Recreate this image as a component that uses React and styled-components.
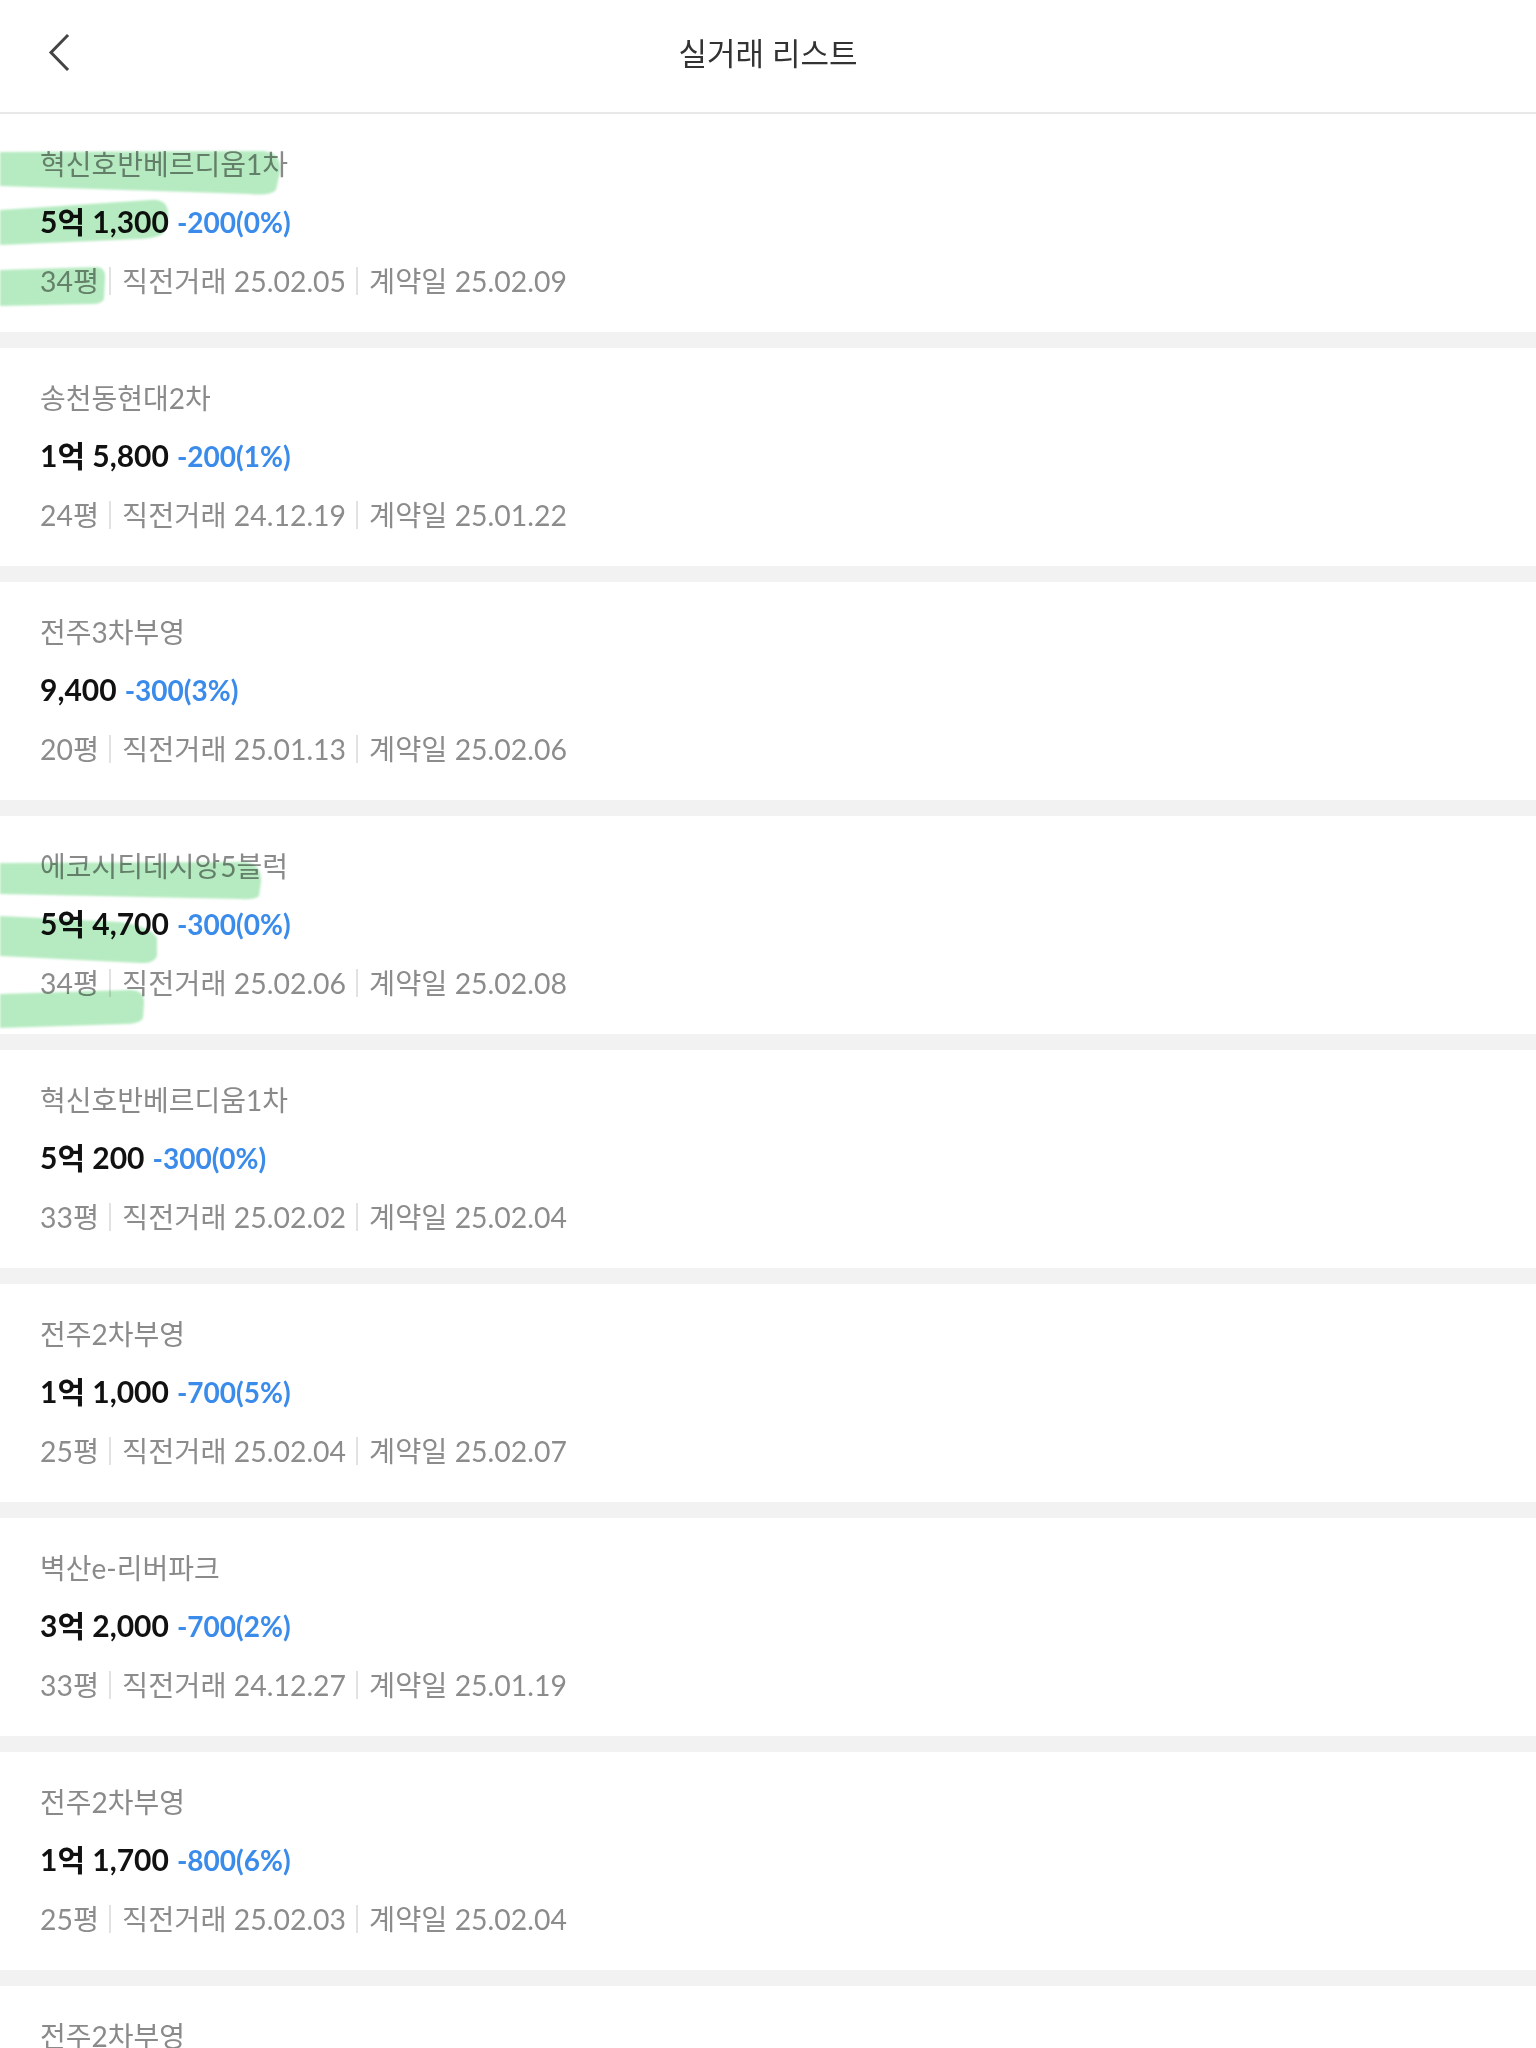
import React from "react";
import styled, { createGlobalStyle } from "styled-components";

const GlobalStyle = createGlobalStyle`
  html, body {
    margin: 0;
    padding: 0;
    background: #ffffff;
  }
  body {
    font-family: Lato, "Noto Sans CJK KR", sans-serif;
    -webkit-font-smoothing: antialiased;
  }
  * { box-sizing: border-box; }
`;

const Page = styled.div`
  width: 1536px;
  min-height: 2048px;
  background: #f2f2f2;
`;

const Header = styled.header`
  display: grid;
  grid-template-columns: 1fr auto 1fr;
  align-items: center;
  height: 114px;
  padding: 0 0 6px 0;
  background: #ffffff;
  border-bottom: 2px solid #e8e8e8;
`;

const BackButton = styled.button`
  justify-self: start;
  display: flex;
  align-items: center;
  justify-content: center;
  width: 60px;
  height: 60px;
  margin-left: 29px;
  padding: 0;
  border: none;
  background: transparent;
  color: #444444;
  cursor: pointer;
`;

const Title = styled.h1`
  margin: 0;
  font-family: Lato, "Noto Sans CJK KR", sans-serif;
  font-size: 31px;
  font-weight: 400;
  color: #333333;
  line-height: 40px;
`;

const List = styled.ul`
  list-style: none;
  margin: 0;
  padding: 0;
  display: flex;
  flex-direction: column;
  gap: 16px;
`;

const Card = styled.li`
  position: relative;
  height: 218px;
  padding: 30px 40px 0;
  background: #ffffff;
  display: flex;
  flex-direction: column;
  overflow: hidden;
`;

const Name = styled.div`
  font-size: 28px;
  line-height: 40px;
  color: #8a8a8a;
  white-space: nowrap;
`;

const PriceRow = styled.div`
  display: flex;
  align-items: baseline;
  margin-top: 17px;
  line-height: 40px;
  white-space: nowrap;
`;

const Price = styled.span`
  font-size: 30px;
  font-weight: 700;
  color: #111111;
`;

const Change = styled.span`
  margin-left: 8px;
  font-size: 28px;
  font-weight: 700;
  color: #3a8bea;
`;

const Meta = styled.div`
  display: flex;
  align-items: center;
  margin-top: 19px;
  font-size: 28.4px;
  line-height: 40px;
  color: #8c8c8c;
  white-space: nowrap;
`;

const Sep = styled.span`
  display: inline-block;
  width: 2px;
  height: 28px;
  margin: 0 11px 0 10px;
  background: #e2e2e2;
`;

const Marker = styled.svg`
  position: absolute;
  left: 0;
  top: 0;
  width: 300px;
  height: 218px;
  pointer-events: none;
  mix-blend-mode: multiply;
  filter: blur(1.2px);
`;

const HIGHLIGHTS = {
  a: [
    "M0,38 L262,37 Q282,38 280,58 L276,76 Q270,82 250,80 L0,72 Z",
    "M0,96 L150,86 Q170,84 168,104 L164,118 Q160,124 140,125 L0,131 Z",
    "M0,156 L96,153 Q106,153 105,165 L104,185 Q102,190 92,190 L0,192 Z",
  ],
  b: [
    "M0,47 L245,46 Q262,48 261,66 L259,80 Q255,84 240,83 L0,78 Z",
    "M0,100 L120,106 Q150,110 157,122 L157,140 Q154,148 140,147 L0,140 Z",
    "M0,178 L130,174 Q145,174 144,188 L143,202 Q140,208 125,208 L0,212 Z",
  ],
};

const deals = [
  { name: "혁신호반베르디움1차", price: "5억 1,300", change: "-200(0%)", size: "34평", prev: "25.02.05", date: "25.02.09", mark: "a" },
  { name: "송천동현대2차", price: "1억 5,800", change: "-200(1%)", size: "24평", prev: "24.12.19", date: "25.01.22" },
  { name: "전주3차부영", price: "9,400", change: "-300(3%)", size: "20평", prev: "25.01.13", date: "25.02.06" },
  { name: "에코시티데시앙5블럭", price: "5억 4,700", change: "-300(0%)", size: "34평", prev: "25.02.06", date: "25.02.08", mark: "b" },
  { name: "혁신호반베르디움1차", price: "5억 200", change: "-300(0%)", size: "33평", prev: "25.02.02", date: "25.02.04" },
  { name: "전주2차부영", price: "1억 1,000", change: "-700(5%)", size: "25평", prev: "25.02.04", date: "25.02.07" },
  { name: "벽산e-리버파크", price: "3억 2,000", change: "-700(2%)", size: "33평", prev: "24.12.27", date: "25.01.19" },
  { name: "전주2차부영", price: "1억 1,700", change: "-800(6%)", size: "25평", prev: "25.02.03", date: "25.02.04" },
  { name: "전주2차부영", price: "1억 1,200", change: "-800(7%)", size: "25평", prev: "25.01.30", date: "25.02.03" },
];

function ChevronLeft() {
  return (
    <svg width="24" height="40" viewBox="0 0 24 40" fill="none">
      <path d="M20 3 L4 19.5 L20 36" stroke="currentColor" strokeWidth="3" strokeLinecap="square" strokeLinejoin="miter" />
    </svg>
  );
}

function DealCard({ d }) {
  return (
    <Card>
      <Name>{d.name}</Name>
      <PriceRow>
        <Price>{d.price}</Price>
        <Change>{d.change}</Change>
      </PriceRow>
      <Meta>
        <span>{d.size}</span>
        <Sep />
        <span>직전거래 {d.prev}</span>
        <Sep />
        <span>계약일 {d.date}</span>
      </Meta>
      {d.mark && (
        <Marker viewBox="0 0 300 218">
          {HIGHLIGHTS[d.mark].map((p, i) => (
            <path key={i} d={p} fill="#a6e6b3" fillOpacity="0.82" />
          ))}
        </Marker>
      )}
    </Card>
  );
}

export default function App() {
  return (
    <>
      <GlobalStyle />
      <Page>
        <Header>
          <BackButton aria-label="뒤로">
            <ChevronLeft />
          </BackButton>
          <Title>실거래 리스트</Title>
          <span />
        </Header>
        <List>
          {deals.map((d, i) => (
            <DealCard key={i} d={d} />
          ))}
        </List>
      </Page>
    </>
  );
}
